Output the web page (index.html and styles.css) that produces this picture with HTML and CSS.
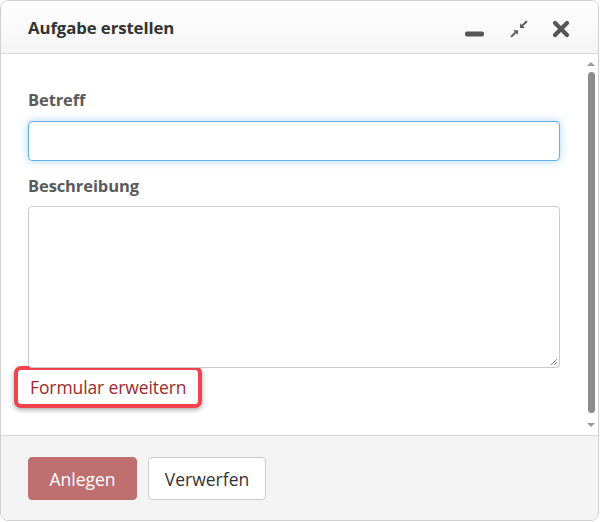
FILE: index.html
```html
<!DOCTYPE html>
<html lang="de">
<head>
<meta charset="utf-8">
<title>Aufgabe erstellen</title>
<link rel="stylesheet" href="styles.css">
</head>
<body>
<div class="dialog">
  <div class="header">
    <div class="title">Aufgabe erstellen</div>
    <div class="tools">
      <svg class="ic ic-min" width="20" height="6" viewBox="0 0 20 6"><rect x="0" y="0.5" width="19" height="5" rx="2" fill="#555"/></svg>
      <svg class="ic ic-cmp" width="18" height="18" viewBox="0 0 16 16">
        <polygon points="9,7 9,2.8 13.2,7" fill="#555"/>
        <line x1="11" y1="5" x2="15" y2="1" stroke="#555" stroke-width="1.7"/>
        <polygon points="7,9 7,13.2 2.8,9" fill="#555"/>
        <line x1="5" y1="11" x2="1" y2="15" stroke="#555" stroke-width="1.7"/>
      </svg>
      <svg class="ic ic-close" width="18" height="18" viewBox="0 0 18 18"><path d="M3 3 L15 15 M15 3 L3 15" stroke="#555" stroke-width="4.2" stroke-linecap="round"/></svg>
    </div>
  </div>
  <div class="body">
    <div class="content">
      <label class="lbl lbl-first">Betreff</label>
      <div class="input focus"></div>
      <label class="lbl">Beschreibung</label>
      <div class="textarea">
        <svg class="grip" width="8" height="8" viewBox="0 0 8 8"><path d="M7 1 L1 7 M7 4 L4 7" stroke="#888" stroke-width="1"/></svg>
      </div>
      <div class="linkrow">
        <span class="highlight"><a class="link">Formular erweitern</a></span>
      </div>
    </div>
    <div class="scrollbar">
      <div class="arrow up"></div>
      <div class="thumb"></div>
      <div class="arrow down"></div>
    </div>
  </div>
  <div class="footer">
    <button class="btn btn-primary">Anlegen</button>
    <button class="btn btn-default">Verwerfen</button>
  </div>
</div>
</body>
</html>
```
FILE: styles.css
```css
* { box-sizing: border-box; }
html, body { margin: 0; padding: 0; background: #fff; }
body { font-family: "Open Sans", "Noto Sans", sans-serif; color: #333; }

.dialog {
  width: 599px;
  height: 521px;
  border: 1px solid #d0d0d0;
  border-radius: 8px;
  overflow: hidden;
  display: flex;
  flex-direction: column;
  background: #fff;
}

.header {
  height: 53px;
  flex: none;
  display: flex;
  align-items: center;
  justify-content: space-between;
  padding: 0 28px 0 27px;
  background: linear-gradient(#ffffff, #f4f4f4);
  border-bottom: 1px solid #dcdcdc;
}
.title {
  font-size: 16.8px;
  font-weight: 700;
  color: #333;
  letter-spacing: -0.1px;
  margin-top: 1px;
}
.tools { display: flex; align-items: center; }
.ic { display: block; }
.ic-min { margin-top: 14px; }
.ic-cmp { margin-left: 25px; margin-top: 3px; }
.ic-close { margin-left: 24px; margin-top: 4px; }

.body {
  height: 382px;
  flex: none;
  display: flex;
  border-bottom: 1px solid #d8d8d8;
  overflow: hidden;
}
.content {
  flex: 1;
  padding: 0 25px 0 27px;
}
.lbl {
  display: block;
  font-size: 16.5px;
  font-weight: 700;
  color: #5a5a5a;
  margin-top: 13px;
  margin-bottom: 8px;
  line-height: 24px;
  letter-spacing: -0.1px;
}
.lbl-first { margin-top: 34px; margin-bottom: 9px; }
.input {
  height: 40px;
  border: 1px solid #ccc;
  border-radius: 4px;
  background: #fff;
}
.input.focus {
  border-color: #66afe9;
  box-shadow: 0 0 8px rgba(102, 175, 233, 0.55), inset 0 1px 1px rgba(0,0,0,0.05);
}
.textarea {
  height: 162px;
  border: 1px solid #ccc;
  border-radius: 4px;
  position: relative;
  background: #fff;
}
.grip { position: absolute; right: 1px; bottom: 1px; }

.linkrow { margin-left: -14px; margin-top: -2px; }
.highlight {
  display: inline-block;
  border: 4px solid #f0434b;
  border-radius: 7px;
  padding: 5px 12px 5px 12px;
  box-shadow: 0 2px 5px rgba(0,0,0,0.35);
  background: #fff;
}
.link {
  font-size: 17.5px;
  color: #9c2a2a;
  letter-spacing: -0.1px;
  line-height: 24px;
  display: block;
}

.scrollbar {
  width: 12px;
  flex: none;
  display: flex;
  flex-direction: column;
  align-items: center;
  padding: 8px 0 8px 0;
  margin-right: 1px;
}
.arrow { width: 0; height: 0; border-left: 4px solid transparent; border-right: 4px solid transparent; }
.arrow.up { border-bottom: 4px solid #999; }
.arrow.down { border-top: 4px solid #999; }
.thumb {
  flex: 1;
  width: 7px;
  background: #8c8c8c;
  border-radius: 4px;
  margin: 6px 0 10px 0;
}

.footer {
  flex: 1;
  background: #f4f4f4;
  display: flex;
  align-items: flex-start;
  gap: 11px;
  padding: 21px 28px 0 27px;
}
.btn {
  height: 43px;
  font-family: "Open Sans", "Noto Sans", sans-serif;
  font-size: 17.5px;
  border-radius: 4px;
  padding: 0;
  cursor: pointer;
}
.btn-primary {
  background: #bf6f6f;
  border: 1px solid #bf6f6f;
  color: #fff;
  width: 109px;
}
.btn-default {
  background: #fff;
  border: 1px solid #ccc;
  color: #333;
  width: 118px;
}
```
